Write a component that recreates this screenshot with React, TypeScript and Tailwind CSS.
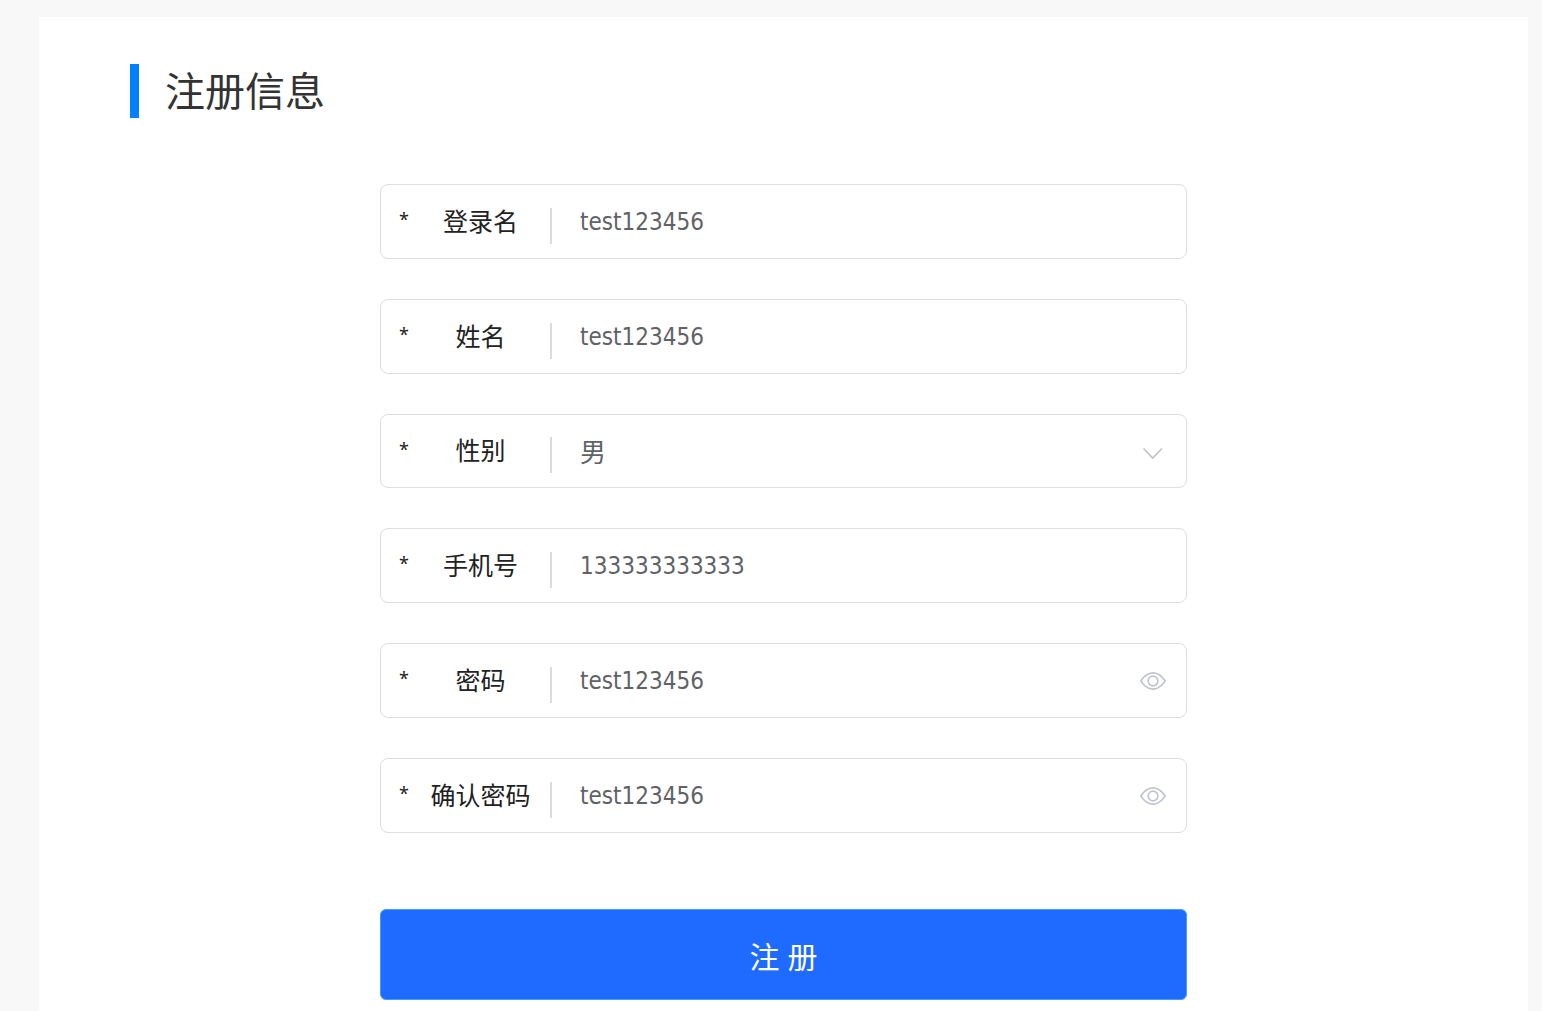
import { useState } from 'react';

const fontStack = "font-['Noto_Sans','Noto_Sans_CJK_SC',sans-serif]";

type FieldProps = {
  id: string;
  label: string;
  initial: string;
  kind?: 'text' | 'password' | 'select';
};

function EyeIcon() {
  return (
    <svg viewBox="0 0 1024 1024" className="size-[26px]" fill="currentColor" aria-hidden="true">
      <path d="M512 160c320 0 512 352 512 352S832 864 512 864 0 512 0 512s192-352 512-352m0 64c-225.28 0-384.128 208.064-436.8 288 52.608 79.872 211.456 288 436.8 288 225.28 0 384.128-208.064 436.8-288-52.608-79.872-211.456-288-436.8-288m0 64a224 224 0 1 1 0 448 224 224 0 0 1 0-448m0 64a160.192 160.192 0 0 0-160 160c0 88.192 71.744 160 160 160s160-71.808 160-160-71.744-160-160-160" />
    </svg>
  );
}

function ChevronIcon() {
  return (
    <svg viewBox="0 0 26 26" className="size-[26px]" fill="none" stroke="currentColor" strokeWidth="1.7" aria-hidden="true">
      <path d="M3.5 10.5l9.2 9.6 9.2-9.6" />
    </svg>
  );
}

function Field({ id, label, initial, kind = 'text' }: FieldProps) {
  const [value, setValue] = useState(initial);
  const [visible, setVisible] = useState(true);
  const control = 'h-full w-full appearance-none bg-transparent text-[#606266] outline-none';
  return (
    <div
      className={`flex items-center rounded-lg border border-[#dcdee2] bg-white pl-[18px] pr-5 ${
        kind === 'select' ? 'h-[74px]' : 'h-[75px]'
      }`}
    >
      <span className="w-3 pb-1 text-[18px] text-[#222]">*</span>
      <label htmlFor={id} className="w-[139px] text-center text-[25px] text-[#222]">
        {label}
      </label>
      <span className="mt-2 h-9 w-0.5 bg-[#dcdcdc]" />
      <div className="flex h-full flex-1 items-center pl-7">
        {kind === 'select' ? (
          <select
            id={id}
            value={value}
            onChange={(e) => setValue(e.target.value)}
            className={`pt-0.5 text-[26px] ${control}`}
          >
            <option>男</option>
            <option>女</option>
          </select>
        ) : (
          <input
            id={id}
            type={visible ? 'text' : 'password'}
            value={value}
            onChange={(e) => setValue(e.target.value)}
            className={`font-['DejaVu_Sans_Condensed','Noto_Sans','Noto_Sans_CJK_SC',sans-serif] text-[24px] ${control}`}
          />
        )}
        {kind === 'select' && (
          <span className="pointer-events-none text-[#c0c4cc]">
            <ChevronIcon />
          </span>
        )}
        {kind === 'password' && (
          <button
            type="button"
            aria-label="显示或隐藏密码"
            onClick={() => setVisible(!visible)}
            className="text-[#c0c4cc]"
          >
            <EyeIcon />
          </button>
        )}
      </div>
    </div>
  );
}

export default function App() {
  return (
    <div className={`min-h-screen bg-[#f8f8f8] pl-[39px] pr-3.5 pt-[17px] ${fontStack}`}>
      <main className="min-h-screen bg-white px-[91px] pt-[47px]">
        <h1 className="flex h-[54px] items-center border-l-[9px] border-[#007fff] pl-[26px] text-[40px] text-[#333]">
          注册信息
        </h1>
        <form className="mx-auto mt-[66px] flex max-w-[807px] flex-col gap-10" onSubmit={(e) => e.preventDefault()}>
          <Field id="login" label="登录名" initial="test123456" />
          <Field id="name" label="姓名" initial="test123456" />
          <Field id="gender" label="性别" initial="男" kind="select" />
          <Field id="phone" label="手机号" initial="133333333333" />
          <Field id="password" label="密码" initial="test123456" kind="password" />
          <Field id="confirm" label="确认密码" initial="test123456" kind="password" />
          <button
            type="submit"
            className="mt-9 h-[91px] rounded-md border border-[#409eff] bg-[#1f6aff] pt-1 text-[30px] text-white"
          >
            注 册
          </button>
        </form>
      </main>
    </div>
  );
}
